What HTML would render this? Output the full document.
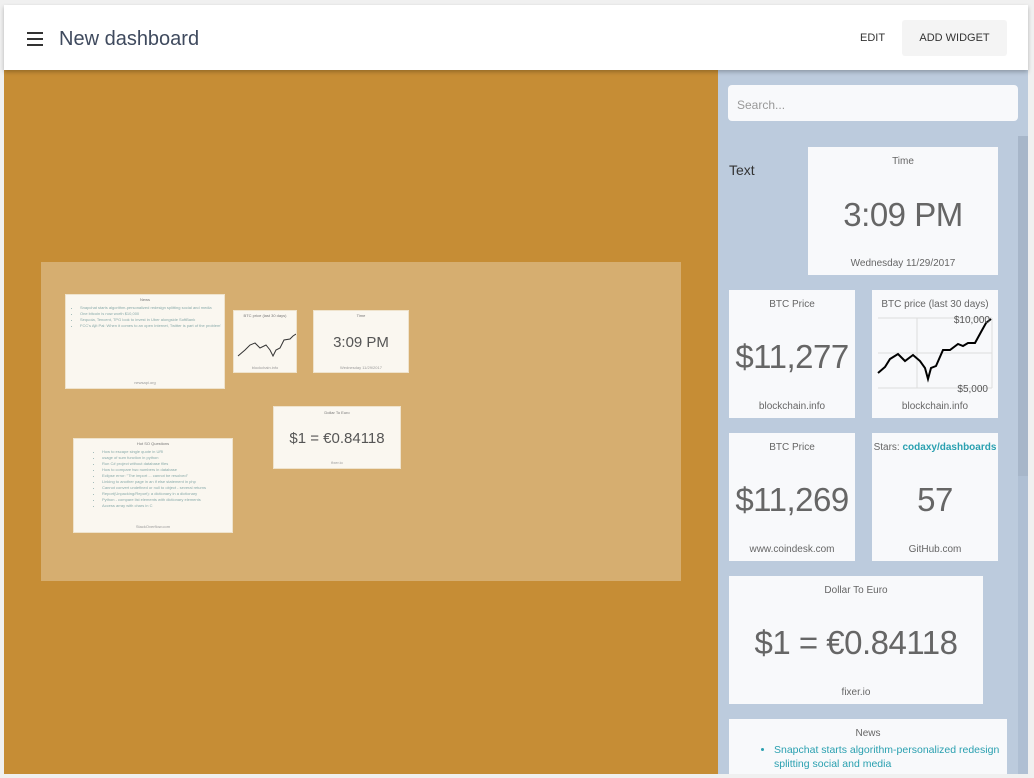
<!DOCTYPE html>
<html><head><meta charset="utf-8"><style>
*{box-sizing:border-box;margin:0;padding:0}
body{width:1034px;height:778px;background:#f0f0f0;font-family:"Liberation Sans",sans-serif;position:relative;overflow:hidden}
.abs{position:absolute}
#hdr{left:4px;top:5px;width:1024px;height:65px;background:#fff;box-shadow:0 2px 4px rgba(0,0,0,.25);z-index:2}
#main{left:4px;top:70px;width:714px;height:704px;background:#c68d35}
#side{left:718px;top:70px;width:310px;height:704px;background:#bccbdd;overflow:hidden}
.card{position:absolute;background:#f8f9fb;text-align:center;color:#666}
.card .t{position:absolute;top:9px;left:0;right:0;font-size:10px;color:#666}
.card .b{position:absolute;left:0;right:0;font-size:33px;color:#666;font-weight:normal;letter-spacing:-0.5px}
.card .f{position:absolute;bottom:6px;left:0;right:0;font-size:10px;color:#666}
.m{position:absolute;background:#faf7f0;border:1px solid #efe3cc;color:#999;font-size:4px;text-align:center}
.m ul{text-align:left;padding-left:14px;color:#8aa;line-height:6px}
</style></head><body>
<div id="hdr" class="abs">
  <div class="abs" style="left:23px;top:27px;width:16px;height:2px;background:#333"></div>
  <div class="abs" style="left:23px;top:33px;width:16px;height:2px;background:#333"></div>
  <div class="abs" style="left:23px;top:39px;width:16px;height:2px;background:#333"></div>
  <div class="abs" style="left:55px;top:23px;font-size:20px;color:#3f4a5e">New dashboard</div>
  <div class="abs" style="left:856px;top:27px;font-size:11px;color:#333">EDIT</div>
  <div class="abs" style="left:898px;top:15px;width:105px;height:36px;background:#f4f4f4;border-radius:3px;font-size:11px;color:#333;text-align:center;line-height:36px">ADD WIDGET</div>
</div>
<div id="main" class="abs">
  <div class="abs" style="left:37px;top:192px;width:640px;height:319px;background:#d6ae70">
    <div class="m" style="left:24px;top:32px;width:160px;height:95px"><div style="padding:2px 0 3px;color:#777">News</div>
      <ul><li>Snapchat starts algorithm-personalized redesign splitting social and media</li><li>One bitcoin is now worth $10,000</li><li>Sequoia, Tencent, TPG look to invest in Uber alongside SoftBank</li><li>FCC's Ajit Pai: When it comes to an open Internet, Twitter is part of the problem'</li></ul>
      <div style="position:absolute;bottom:3px;width:100%">newsapi.org</div></div>
    <div class="m" style="left:192px;top:48px;width:64px;height:63px"><div style="padding-top:2px;color:#777">BTC price (last 30 days)</div>
      <svg class="abs" style="left:2px;top:10px" width="60" height="43"><path d="M2 35 L9 29 L14 24 L19 22 L24 27 L30 24 L34 29 L37 35 L40 29 L44 27 L48 19 L54 18 L57 15 L60 13" fill="none" stroke="#333" stroke-width="1"/></svg>
      <div style="position:absolute;bottom:2px;width:100%">blockchain.info</div></div>
    <div class="m" style="left:272px;top:48px;width:96px;height:63px"><div style="padding-top:2px;color:#777">Time</div>
      <div style="font-size:15px;color:#555;margin-top:16px">3:09 PM</div>
      <div style="position:absolute;bottom:2px;width:100%">Wednesday 11/29/2017</div></div>
    <div class="m" style="left:232px;top:144px;width:128px;height:63px"><div style="padding-top:3px;color:#777">Dollar To Euro</div>
      <div style="font-size:15px;color:#555;margin-top:15px">$1 = €0.84118</div>
      <div style="position:absolute;bottom:3px;width:100%">fixer.io</div></div>
    <div class="m" style="left:32px;top:176px;width:160px;height:95px"><div style="padding:2px 0 3px;color:#777">Hot SO Questions</div>
      <ul style="padding-left:28px"><li>How to escape single quote in URI</li><li>usage of sum function in python</li><li>Run C# project without database files</li><li>How to compare two numbers in database</li><li>Eclipse error: "The import ... cannot be resolved"</li><li>Linking to another page in an if else statement in php</li><li>Cannot convert undefined or null to object - several returns</li><li>Report(Unpacking/Report): a dictionary in a dictionary</li><li>Python - compare list elements with dictionary elements</li><li>Access array with chars in C</li></ul>
      <div style="position:absolute;bottom:3px;width:100%">StackOverflow.com</div></div>
  </div>
</div>
<div id="side" class="abs">
  <div class="abs" style="left:300px;top:66px;width:10px;height:640px;background:#afbfd3"></div>
  <div class="abs" style="left:300px;top:66px;width:10px;height:340px;background:#a7b6c9"></div>
  <div class="abs" style="left:10px;top:15px;width:290px;height:36px;background:#f8f9fb;border-radius:4px;font-size:12px;color:#999;padding:13px 0 0 9px">Search...</div>
  <div class="abs" style="left:11px;top:92px;font-size:14px;color:#333">Text</div>
  <div class="card" style="left:90px;top:77px;width:190px;height:128px"><div class="t">Time</div><div class="b" style="top:49px">3:09 PM</div><div class="f">Wednesday 11/29/2017</div></div>
  <div class="card" style="left:11px;top:220px;width:126px;height:128px"><div class="t">BTC Price</div><div class="b" style="top:48px">$11,277</div><div class="f">blockchain.info</div></div>
  <div class="card" style="left:154px;top:220px;width:126px;height:128px"><div class="t">BTC price (last 30 days)</div>
    <svg class="abs" style="left:0;top:0" width="126" height="128">
      <g stroke="#ddd" stroke-width="1"><line x1="6" y1="28" x2="120" y2="28"/><line x1="6" y1="63" x2="120" y2="63"/><line x1="6" y1="98" x2="120" y2="98"/><line x1="45" y1="28" x2="45" y2="98"/><line x1="120" y1="28" x2="120" y2="98"/></g>
      <path d="M6 83 L13 77 L18 69 L26 64 L33 71 L41 65 L48 71 L53 78 L56 89 L59 78 L64 76 L71 60 L78 60 L86 54 L91 56 L96 53 L103 53 L109 42 L114 33 L119 29" fill="none" stroke="#000" stroke-width="2"/>
      <text x="118" y="33" font-size="10" fill="#555" text-anchor="end" font-family="Liberation Sans">$10,000</text>
      <text x="116" y="102" font-size="10" fill="#555" text-anchor="end" font-family="Liberation Sans">$5,000</text>
    </svg>
    <div class="f">blockchain.info</div></div>
  <div class="card" style="left:11px;top:363px;width:126px;height:128px"><div class="t">BTC Price</div><div class="b" style="top:48px">$11,269</div><div class="f">www.coindesk.com</div></div>
  <div class="card" style="left:154px;top:363px;width:126px;height:128px"><div class="t">Stars: <b style="color:#2aa0b0">codaxy/dashboards</b></div><div class="b" style="top:48px">57</div><div class="f">GitHub.com</div></div>
  <div class="card" style="left:11px;top:506px;width:254px;height:128px"><div class="t">Dollar To Euro</div><div class="b" style="top:48px">$1 = €0.84118</div><div class="f">fixer.io</div></div>
  <div class="card" style="left:11px;top:649px;width:278px;height:80px"><div class="t">News</div>
    <ul class="abs" style="left:45px;top:24px;text-align:left;font-size:10.5px;color:#2aa0b0;line-height:14px;width:230px"><li style="color:#2aa0b0">Snapchat starts algorithm-personalized redesign splitting social and media</li></ul></div>
</div>
</body></html>
